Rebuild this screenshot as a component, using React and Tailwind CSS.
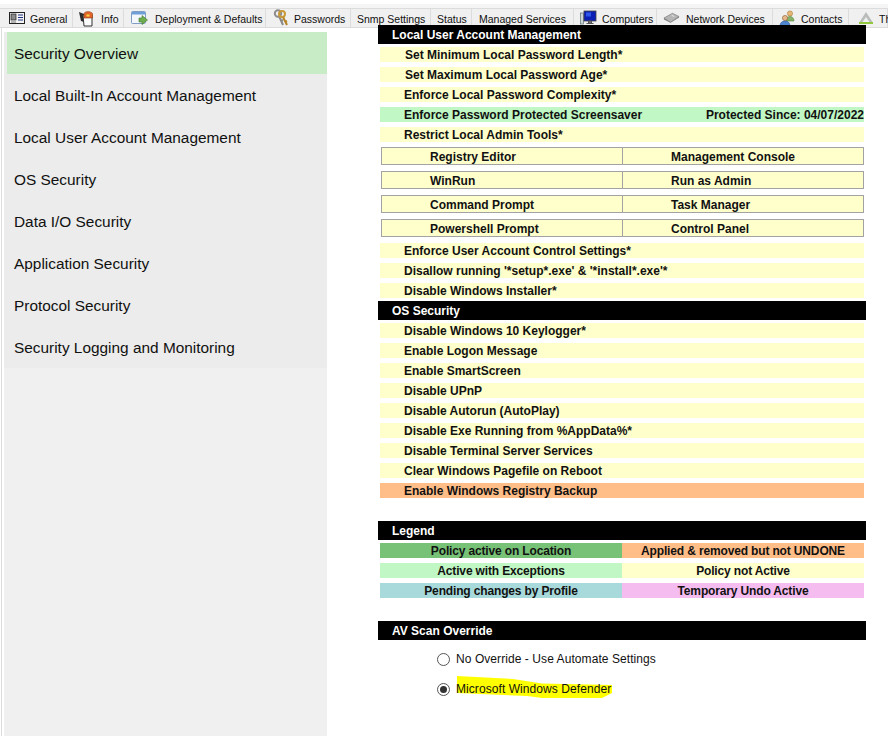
import React from "react";

const IconGeneral = () => (
  <svg width="16" height="14" viewBox="0 0 16 14">
    <rect x="0.5" y="1.5" width="15" height="11" fill="#f4f4f4" stroke="#222" />
    <rect x="2" y="3" width="5" height="6" fill="#8a8a8a" stroke="#222" strokeWidth="0.7" />
    <path d="M9 4h5M9 6.5h5M9 9h5" stroke="#1c2f80" strokeWidth="1" />
    <path d="M2 11h5" stroke="#777" />
  </svg>
);

const IconInfo = () => (
  <svg width="17" height="17" viewBox="0 0 17 17">
    <path d="M1 2l2 9 3 1V4z" fill="#2b2b2b" />
    <path d="M5 5h9v11H6z" fill="#fbfbfb" stroke="#333" />
    <path d="M6 3.5C7 1 13 1 14.5 3.5V8H6z" fill="#e2662c" stroke="#8c3a14" strokeWidth="0.6" />
    <rect x="8.5" y="4.5" width="3" height="2" fill="#f6d33c" />
  </svg>
);

const IconDeploy = () => (
  <svg width="17" height="16" viewBox="0 0 17 16">
    <rect x="0.5" y="1.5" width="14" height="12" rx="1" fill="#f3f7fc" stroke="#7d9dc4" />
    <rect x="1" y="2" width="13" height="2.5" fill="#6f9fd8" />
    <path d="M8 8h3V5.5L16.5 10 11 14.5V12H8z" fill="#6fae4e" stroke="#41752b" strokeWidth="0.6" />
  </svg>
);

const IconKeys = () => (
  <svg width="16" height="18" viewBox="0 0 16 18">
    <circle cx="5" cy="4.5" r="3.2" fill="none" stroke="#8d8d8d" strokeWidth="2" />
    <path d="M6 7l4 9M8 12l2-1" stroke="#8a8a8a" strokeWidth="2" />
    <circle cx="9" cy="5" r="3" fill="none" stroke="#c99a3a" strokeWidth="2" />
    <path d="M10 8l4 8M12 13l2-1" stroke="#b58426" strokeWidth="2" />
  </svg>
);

const IconComputers = () => (
  <svg width="17" height="16" viewBox="0 0 17 16">
    <rect x="0.5" y="3" width="3" height="11" fill="#cfd6d8" stroke="#5a7077" strokeWidth="0.7" />
    <rect x="4" y="1" width="12" height="10" fill="#0b1fb5" stroke="#444" strokeWidth="0.8" />
    <path d="M6 2.5h5v4H6z" fill="#2d55e8" />
    <path d="M8.5 11h3v2h-3zM6.5 13.5h7" stroke="#555" fill="#888" />
  </svg>
);

const IconNetwork = () => (
  <svg width="18" height="12" viewBox="0 0 18 12">
    <path d="M1 6l9-5 7 3.5-9 6z" fill="#b5b5b5" stroke="#7c7c7c" strokeWidth="0.7" />
    <path d="M1 6v1.5l7 3.5 9-5.500V4.500l-9 6z" fill="#7b7b7b" />
    <path d="M9 3l3 1.500" stroke="#e8e8e8" />
  </svg>
);

const IconContacts = () => (
  <svg width="17" height="17" viewBox="0 0 17 17">
    <circle cx="11" cy="3.500" r="2.600" fill="#e7b778" stroke="#a97b3c" strokeWidth="0.6" />
    <path d="M7 11c0-3 2-4.500 4-4.500s4 1.500 4 4.500z" fill="#83b368" stroke="#5b8a42" strokeWidth="0.6" />
    <circle cx="6" cy="8" r="2.600" fill="#e6b88c" stroke="#8c5a2c" strokeWidth="0.6" />
    <path d="M1 16c0-3.500 2.200-5 5-5s5 1.500 5 5z" fill="#4f86cf" stroke="#2e5c9d" strokeWidth="0.6" />
  </svg>
);

const IconTriangle = () => (
  <svg width="16" height="14" viewBox="0 0 16 14">
    <path d="M8 1L14.500 11h-3L8 6 4.500 11h-3z" fill="#b9bcbb" />
    <rect x="1" y="11" width="14" height="2" fill="#92c83e" />
  </svg>
);

const tabs = [
  { label: "General", box: "w-[70px] pl-[5px] gap-[5px]", icon: <IconGeneral /> },
  { label: "Info", box: "w-[51px] pl-[5px] gap-[6px]", icon: <IconInfo /> },
  { label: "Deployment & Defaults", box: "w-[142px] pl-[7px] gap-[7px]", icon: <IconDeploy /> },
  { label: "Passwords", box: "w-[85px] pl-[6px] gap-[5px]", icon: <IconKeys /> },
  { label: "Snmp Settings", box: "w-[80px] pl-[6px]" },
  { label: "Status", box: "w-[41px] pl-[6px]" },
  { label: "Managed Services", box: "w-[102px] pl-[7px]" },
  { label: "Computers", box: "w-[83px] pl-[6px] gap-[5px]", icon: <IconComputers /> },
  { label: "Network Devices", box: "w-[116px] pl-[6px] gap-[6px]", icon: <IconNetwork /> },
  { label: "Contacts", box: "w-[76px] pl-[6px] gap-[5px]", icon: <IconContacts /> },
  { label: "Th", box: "w-[39px] pl-[8px] gap-[5px]", icon: <IconTriangle /> },
];

const sideItems = [
  "Local Built-In Account Management",
  "Local User Account Management",
  "OS Security",
  "Data I/O Security",
  "Application Security",
  "Protocol Security",
  "Security Logging and Monitoring",
];

const Row = ({ children, right, bg = "bg-[#ffffcc]", pl = "pl-[24px]" }) => (
  <div className={`flex h-[15px] items-start justify-between text-[12px] leading-[16px] font-bold whitespace-nowrap text-[#111] ${bg} ${pl}`}>
    <span>{children}</span>
    {right && <span>{right}</span>}
  </div>
);

const Header = ({ children }) => (
  <div className="-mx-[2px] flex h-[19px] items-center bg-black pl-[14px] text-[12px] font-bold text-white">
    {children}
  </div>
);

const ToolBox = ({ left, right }) => (
  <div className="ml-px flex h-[18px] border-y border-[#a3a3a3] bg-[#ffffcc] text-[12px] leading-[18px] font-bold text-[#111]">
    <div className="w-[242px] border-x border-[#a3a3a3] pl-[48px]">{left}</div>
    <div className="flex-1 border-r border-[#a3a3a3] pl-[48px]">{right}</div>
  </div>
);

const LegendRow = ({ left, right, leftBg, rightBg }) => (
  <div className="flex h-[15px] text-center text-[12px] leading-[16px] font-bold tracking-[-0.15px] text-[#111]">
    <div className={`w-[242px] ${leftBg}`}>{left}</div>
    <div className={`flex-1 ${rightBg}`}>{right}</div>
  </div>
);

const App = () => (
  <div className="h-[736px] w-[888px] overflow-hidden bg-white font-['Liberation_Sans',Arial,sans-serif]">
    <div className="h-[4px] bg-white" />
    <div className="h-[4px] bg-[#f5f5f5]" />
    <div className="flex h-[20px] w-[900px] border-y border-[#dcdcdc] bg-[#f0f0f0] pl-[3px]">
      {tabs.map((tab) => (
        <div
          key={tab.label}
          className={`flex shrink-0 items-center border-r border-[#dcdcdc] text-[10.5px] whitespace-nowrap text-[#111] ${tab.box}`}
        >
          {tab.icon && <span className="flex w-[17px] shrink-0 justify-center">{tab.icon}</span>}
          <span className="pt-[3px]">{tab.label}</span>
        </div>
      ))}
    </div>
    <div className="flex h-[708px]">
      <div className="ml-px w-[1px] shrink-0 bg-[#dcdcdc]" />
      <div className="mt-[4px] ml-[2px] flex w-[323px] shrink-0 flex-col bg-[#f0f0f0]">
        <div className="bg-[#ececec] pl-[3px]">
          <div className="flex h-[42px] items-center bg-[#c8edc6] pt-[1px] pl-[7px] text-[15.4px] text-[#111]">Security Overview</div>
          {sideItems.map((item) => (
            <div key={item} className="flex h-[42px] items-center pt-[1px] pl-[7px] text-[15.4px] text-[#111]">
              {item}
            </div>
          ))}
        </div>
      </div>
      <div className="ml-[53px] flex w-[484px] shrink-0 flex-col">
        <div className="-mt-[3px]">
          <Header>Local User Account Management</Header>
        </div>
        <div className="mt-[3px] flex flex-col gap-[5px]">
          <Row pl="pl-[25px]">Set Minimum Local Password Length*</Row>
          <Row pl="pl-[25px]">Set Maximum Local Password Age*</Row>
          <Row>Enforce Local Password Complexity*</Row>
          <Row bg="bg-[#c0f7c4]" right="Protected Since: 04/07/2022">Enforce Password Protected Screensaver</Row>
          <Row>Restrict Local Admin Tools*</Row>
        </div>
        <div className="mt-[5px] flex flex-col gap-[6px]">
          <ToolBox left="Registry Editor" right="Management Console" />
          <ToolBox left="WinRun" right="Run as Admin" />
          <ToolBox left="Command Prompt" right="Task Manager" />
          <ToolBox left="Powershell Prompt" right="Control Panel" />
        </div>
        <div className="mt-[6px] flex flex-col gap-[5px]">
          <Row>Enforce User Account Control Settings*</Row>
          <Row>Disallow running '*setup*.exe' &amp; '*install*.exe'*</Row>
          <Row>Disable Windows Installer*</Row>
        </div>
        <div className="mt-[3px]">
          <Header>OS Security</Header>
        </div>
        <div className="mt-[3px] flex flex-col gap-[5px]">
          <Row>Disable Windows 10 Keylogger*</Row>
          <Row>Enable Logon Message</Row>
          <Row>Enable SmartScreen</Row>
          <Row>Disable UPnP</Row>
          <Row>Disable Autorun (AutoPlay)</Row>
          <Row>Disable Exe Running from %AppData%*</Row>
          <Row>Disable Terminal Server Services</Row>
          <Row>Clear Windows Pagefile on Reboot</Row>
          <Row bg="bg-[#ffbe88]">Enable Windows Registry Backup</Row>
        </div>
        <div className="mt-[23px]">
          <Header>Legend</Header>
        </div>
        <div className="mt-[3px] flex flex-col gap-[5px]">
          <LegendRow left="Policy active on Location" right="Applied & removed but not UNDONE" leftBg="bg-[#78c278]" rightBg="bg-[#ffbe88]" />
          <LegendRow left="Active with Exceptions" right="Policy not Active" leftBg="bg-[#c0f7c4]" rightBg="bg-[#ffffcc]" />
          <LegendRow left="Pending changes by Profile" right="Temporary Undo Active" leftBg="bg-[#a8dadc]" rightBg="bg-[#f5bcf0]" />
        </div>
        <div className="mt-[23px]">
          <Header>AV Scan Override</Header>
        </div>
        <div className="mt-[13px] flex flex-col gap-[17px] pl-[57px] text-[12px] leading-[13px] tracking-[0.07px] text-[#111]">
          <div className="flex items-center gap-[6px]">
            <span className="h-[13px] w-[13px] rounded-full border border-[#555] bg-white" />
            <span>No Override - Use Automate Settings</span>
          </div>
          <div className="flex items-center gap-[6px]">
            <span className="flex h-[13px] w-[13px] items-center justify-center rounded-full border border-[#555] bg-white">
              <span className="h-[7px] w-[7px] rounded-full bg-[#333]" />
            </span>
            <span className="relative">
              {/* hand drawn highlighter mark */}
              <svg className="absolute top-[-7px] left-0" width="158" height="24" viewBox="0 0 158 24">
                <path d="M1 0L57 3 86 7.500 156 9V17L146 22H86L71 20 1 17z" fill="#ffff00" />
              </svg>
              <span className="relative">Microsoft Windows Defender</span>
            </span>
          </div>
        </div>
      </div>
    </div>
  </div>
);

export default App;
